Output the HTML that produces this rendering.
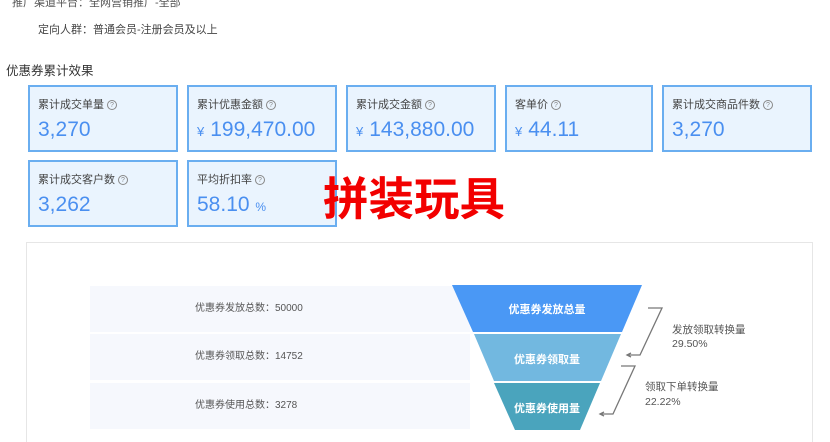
<!DOCTYPE html><html><head><meta charset="utf-8"><style>
*{margin:0;padding:0;box-sizing:border-box}
body{width:830px;height:439px;overflow:hidden;background:#fff;font-family:"Liberation Sans","Noto Sans CJK SC",sans-serif;color:#333;position:relative}
.a{position:absolute;white-space:nowrap}
.c{position:absolute;background:#eaf4fe;border:2px solid #6aaef0;width:150px;height:67px}
.c .t{position:absolute;left:8px;top:9px;font-size:11px;color:#444}
.c .t i{display:inline-block;width:10px;height:10px;border:1px solid #888;border-radius:50%;font-size:7px;font-style:normal;text-align:center;line-height:9px;color:#888;margin-left:3px;vertical-align:1px}
.c .v{position:absolute;left:8px;top:31px;font-size:21px;color:#4a8ff0}
.c .v s{text-decoration:none;font-size:13px;margin-right:6px}
.row{position:absolute;left:90px;width:380px;height:46px;background:#f6f8fd;font-size:10px;color:#555;line-height:46px;padding-left:105px}
</style></head><body>
<div class="a" style="left:12px;top:-6px;font-size:11px;color:#555">推广渠道平台：全网营销推广-全部</div>
<div class="a" style="left:38px;top:21px;font-size:11px;color:#444">定向人群：普通会员-注册会员及以上</div>
<div class="a" style="left:6px;top:60px;font-size:12.5px;color:#333">优惠券累计效果</div>
<div class="c" style="left:28px;top:85px"><div class="t">累计成交单量<i>?</i></div><div class="v">3,270</div></div>
<div class="c" style="left:187px;top:85px"><div class="t">累计优惠金额<i>?</i></div><div class="v"><s>¥</s>199,470.00</div></div>
<div class="c" style="left:346px;top:85px"><div class="t">累计成交金额<i>?</i></div><div class="v"><s>¥</s>143,880.00</div></div>
<div class="c" style="left:505px;top:85px;width:148px"><div class="t">客单价<i>?</i></div><div class="v"><s>¥</s>44.11</div></div>
<div class="c" style="left:662px;top:85px"><div class="t">累计成交商品件数<i>?</i></div><div class="v">3,270</div></div>
<div class="c" style="left:28px;top:160px"><div class="t">累计成交客户数<i>?</i></div><div class="v">3,262</div></div>
<div class="c" style="left:187px;top:160px"><div class="t">平均折扣率<i>?</i></div><div class="v">58.10 <s style="font-size:12px">%</s></div></div>
<div class="a" style="left:323px;top:170px;font-size:45.5px;font-weight:bold;color:#f20000;font-family:'Noto Sans CJK SC',sans-serif;line-height:52px">拼装玩具</div>
<div class="a" style="left:26px;top:242px;width:787px;height:200px;border:1px solid #e6e6e6;border-bottom:none"></div>
<div class="row" style="top:286px">优惠券发放总数：50000</div>
<div class="row" style="top:334px">优惠券领取总数：14752</div>
<div class="row" style="top:383px">优惠券使用总数：3278</div>
<svg class="a" style="left:0;top:0" width="830" height="439">
<polygon points="452,285 642,285 622,332 473,332" fill="#4a98f5"/>
<polygon points="474,334 621,334 601,381 494,381" fill="#72b8e0"/>
<polygon points="494,383 600,383 580,430 515,430" fill="#4aa4bd"/>
<g fill="#fff" font-size="11" font-weight="bold" text-anchor="middle" font-family="Noto Sans CJK SC,sans-serif">
<text x="547" y="313">优惠券发放总量</text><text x="547" y="363">优惠券领取量</text><text x="547" y="412">优惠券使用量</text></g>
<g fill="none" stroke="#777" stroke-width="1.3">
<path d="M648,308 L662,308 L640,355 L627,355"/><path d="M631,353 L627,355 L631,357"/>
<path d="M621,366 L635,366 L613,414 L600,414"/><path d="M604,412 L600,414 L604,416"/></g>
<g fill="#555" font-size="10.5" font-family="Liberation Sans,Noto Sans CJK SC,sans-serif">
<text x="672" y="333">发放领取转换量</text><text x="672" y="347">29.50%</text>
<text x="645" y="390">领取下单转换量</text><text x="645" y="405">22.22%</text></g>
</svg>
</body></html>
